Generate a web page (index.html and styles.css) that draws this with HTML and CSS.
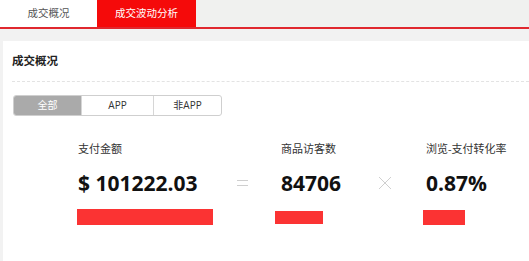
FILE: index.html
```html
<!DOCTYPE html>
<html lang="zh">
<head>
<meta charset="utf-8">
<title>成交概况</title>
<link rel="stylesheet" href="styles.css">
</head>
<body>
<div class="tabs">
  <div class="tab">成交概况</div>
  <div class="tab active">成交波动分析</div>
</div>
<div class="main">
  <div class="card">
    <div class="card-title">成交概况</div>
    <div class="seg">
      <div class="seg-item seg-on">全部</div>
      <div class="seg-item seg-mid">APP</div>
      <div class="seg-item seg-last">非APP</div>
    </div>
    <div class="metrics">
      <div class="metric m1">
        <div class="label">支付金额</div>
        <div class="value">$ 101222.03</div>
        <div class="bar bar1" style="width:136px"></div>
      </div>
      <div class="op">
        <svg width="11" height="8" viewBox="0 0 11 8"><path d="M0 1.5H11M0 6.5H11" stroke="#cfcfcf" stroke-width="1"/></svg>
      </div>
      <div class="metric m2">
        <div class="label">商品访客数</div>
        <div class="value">84706</div>
        <div class="bar bar2" style="width:48px"></div>
      </div>
      <div class="op">
        <svg width="14" height="14" viewBox="0 0 14 14"><path d="M1 1L13 13M13 1L1 13" stroke="#cfcfcf" stroke-width="1"/></svg>
      </div>
      <div class="metric m3">
        <div class="label">浏览-支付转化率</div>
        <div class="value">0.87%</div>
        <div class="bar bar3" style="width:42px"></div>
      </div>
    </div>
  </div>
</div>
</body>
</html>
```

FILE: styles.css
```css
* { box-sizing: border-box; }
html, body { margin: 0; padding: 0; }
body {
  width: 529px;
  height: 261px;
  overflow: hidden;
  background: #f2f2f2;
  font-family: "Open Sans", "Noto Sans CJK SC", sans-serif;
  color: #333;
}
.tabs {
  display: flex;
  height: 29px;
  background: #f0f1ef;
  border-bottom: 2px solid #e0282e;
}
.tab {
  width: 97px;
  height: 27px;
  line-height: 27px;
  text-align: center;
  font-size: 10.5px;
  color: #555;
  background: #fff;
}
.tab.active {
  width: 99px;
  background: #f50a0a;
  color: #fff;
}
.main {
  padding: 12px 0 0 3px;
}
.card {
  background: #fff;
  height: 230px;
  padding-left: 9px;
}
.card-title {
  padding: 12px 0;
  line-height: 16px;
  font-size: 11.5px;
  font-weight: bold;
  color: #222;
  border-bottom: 1px dashed #e3e3e3;
}
.seg {
  display: flex;
  margin: 13px 0 0 1px;
  width: 209px;
  height: 21px;
  border: 1px solid #cfcfcf;
  border-radius: 3px;
  overflow: hidden;
}
.seg-item {
  line-height: 19px;
  text-align: center;
  font-size: 10px;
  color: #333;
}
.seg-on { width: 67px; background: #aaaaaa; color: #fff; }
.seg-mid { width: 72px; border-left: 1px solid #d6d6d6; }
.seg-last { flex: 1; border-left: 1px solid #d6d6d6; }
.metrics {
  display: grid;
  grid-template-columns: 125px 78px 63px 82px auto;
  margin: 25px 0 0 66px;
}
.label {
  line-height: 16px;
  font-size: 11px;
  color: #333;
}
.value {
  margin-top: 13px;
  line-height: 26px;
  font-size: 21px;
  font-weight: bold;
  color: #111;
  white-space: nowrap;
}
.bar {
  background: #fb3333;
}
.bar1 { margin: 13px 0 0 -1px; height: 16px; }
.bar2 { margin: 15px 0 0 -6px; height: 13px; }
.bar3 { margin: 14px 0 0 -3px; height: 15px; }
.op {
  display: flex;
  justify-content: center;
  align-items: center;
  height: 26px;
  margin-top: 29px;
}
```
